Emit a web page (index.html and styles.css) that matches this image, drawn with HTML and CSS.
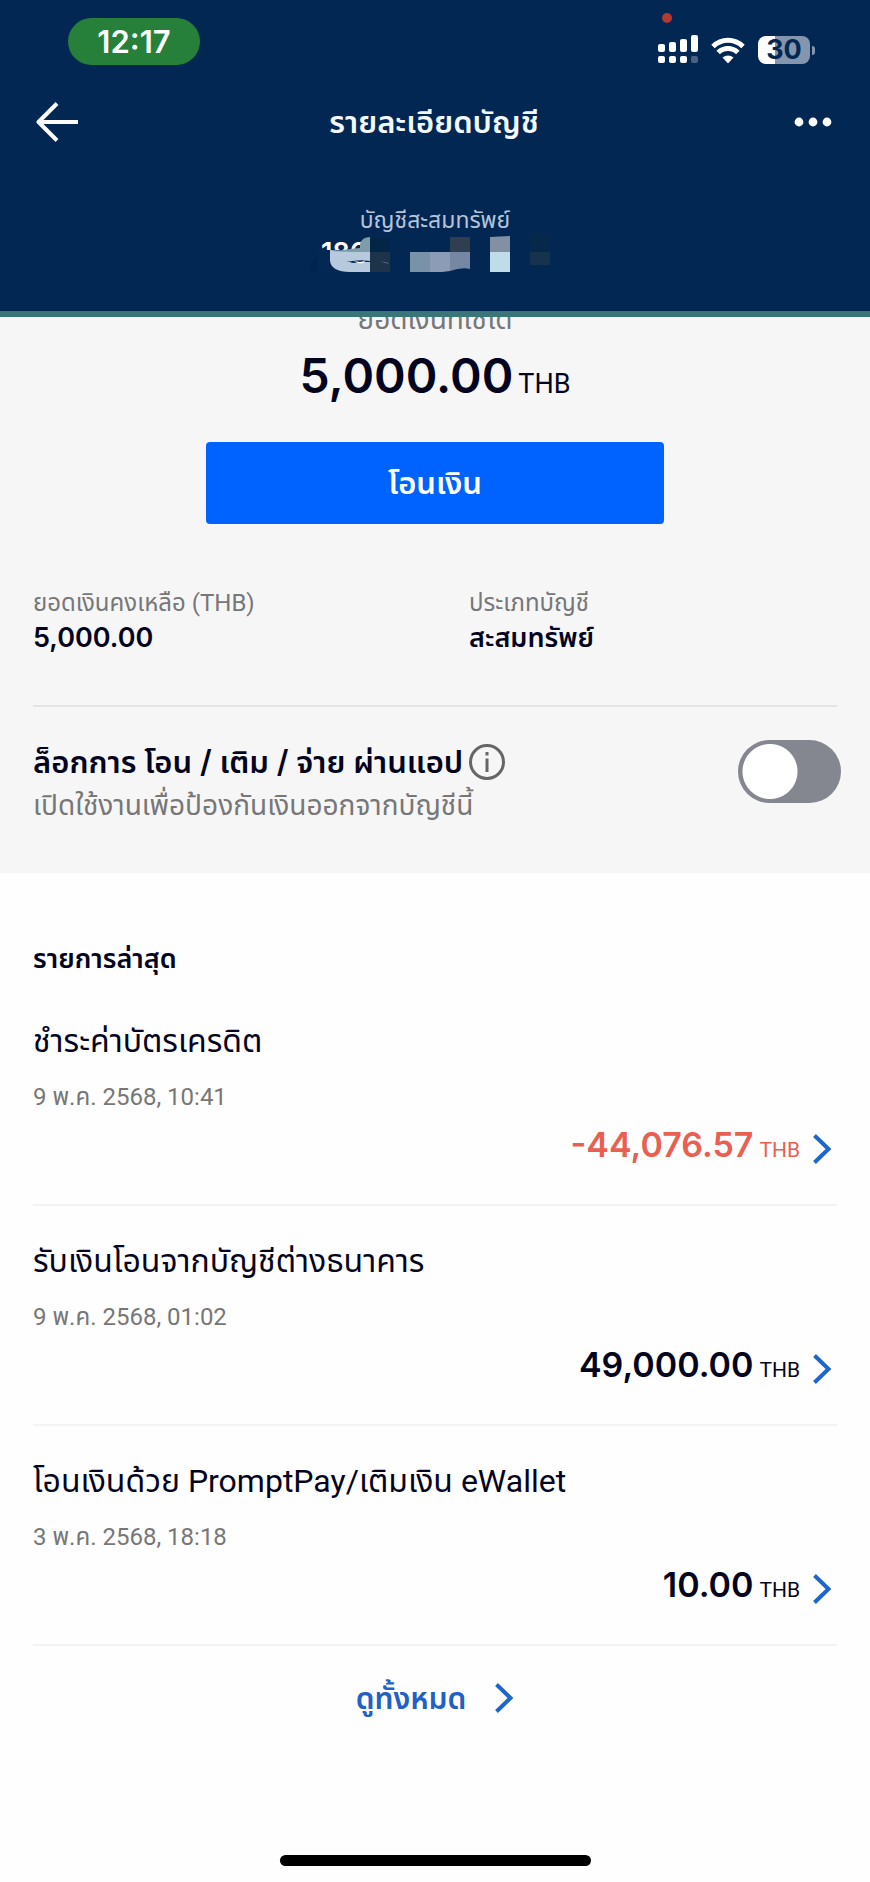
FILE: index.html
```html
<!DOCTYPE html>
<html lang="th">
<head>
<meta charset="utf-8">
<meta name="viewport" content="width=device-width, initial-scale=1">
<title>รายละเอียดบัญชี</title>
<link rel="stylesheet" href="styles.css">
</head>
<body>
<header class="header">
  <div class="status">
    <time class="clock">12:17</time>
    <div class="status-icons">
      <svg class="signal" width="40" height="52" viewBox="0 0 40 52" aria-hidden="true">
        <circle cx="9" cy="6" r="5" fill="#b33a34"/>
        <g fill="#fff">
          <rect x="0" y="32" width="7" height="8" rx="2"/><rect x="11" y="30" width="7" height="10" rx="2"/>
          <rect x="22" y="27" width="7" height="13" rx="2"/><rect x="33" y="23" width="7" height="17" rx="2"/>
          <rect x="0" y="44" width="7" height="7" rx="2"/><rect x="11" y="44" width="7" height="7" rx="2"/>
          <rect x="22" y="44" width="7" height="7" rx="2"/><rect x="33" y="44" width="7" height="7" rx="2" opacity=".28"/>
        </g>
      </svg>
      <svg width="34" height="27" viewBox="0 0 34 27" aria-hidden="true">
        <g fill="none" stroke="#fff" stroke-width="5">
          <path d="M2 9.500C10.500 1.200 23.500 1.200 32 9.500"/>
          <path d="M7.200 15.500C12.800 10.200 21.200 10.200 26.800 15.500"/>
        </g>
        <path d="M11.500 20.500C14.700 17.700 19.300 17.700 22.500 20.500L17 26.500Z" fill="#fff"/>
      </svg>
      <div class="battery"><span>30</span></div>
    </div>
  </div>
  <nav class="nav">
    <button class="icon-button" type="button" aria-label="ย้อนกลับ">
      <svg width="42" height="40" viewBox="0 0 42 40" fill="none" stroke="#fff" stroke-width="4" stroke-linejoin="round"><path d="M21 1.500 2.500 20 21 38.500M2.500 20H42"/></svg>
    </button>
    <h1 class="title">รายละเอียดบัญชี</h1>
    <button class="icon-button icon-button-end" type="button" aria-label="เพิ่มเติม">
      <svg width="38" height="10" viewBox="0 0 38 10" fill="#fff"><circle cx="5" cy="5" r="4.400"/><circle cx="19" cy="5" r="4.400"/><circle cx="33" cy="5" r="4.400"/></svg>
    </button>
  </nav>
  <p class="account-type">บัญชีสะสมทรัพย์</p>
  <svg class="account-number" width="250" height="42" viewBox="310 233 250 42" role="img" aria-label="เลขที่บัญชีถูกปิดบัง">
    <path d="M310 272l4-14 16-16v30z" fill="#01234f"/>
    <text x="321" y="262" class="masked">186</text>
    <path d="M318 250h52v22h-52z" fill="#042753"/>
    <path d="M330 250c16 2 32 0 40 2v20h-20c-12 0-20-4-20-12z" fill="#b7cadd"/>
    <path d="M360 248v-4q2-7 10-7v15c-14 0-26 0-40-1 14 0 22-3 30-3z" fill="#7f9caa"/>
    <path d="M346 262q14-3 24-1v1q-8 0-12 0-5 2-8 0z" fill="#0a2c55"/>
    <path d="M353 260q7 4 13 0l-3 3q-4 1-7-1z" fill="#fff"/>
    <path d="M370 237h20v15h-20z" fill="#032546"/>
    <path d="M370 252h20v20h-20z" fill="#1d3349"/>
    <path d="M378 257q3 6 11 6-7 1-11-6z" fill="#fff"/>
    <path d="M410 252h20v20h-20z" fill="#7892a8"/>
    <path d="M430 252h20v19l-8 1h-12z" fill="#8c9cb7"/>
    <path d="M450 237h20v15h-20z" fill="#303e50"/>
    <path d="M450 252h20v17q-8-2-20 2z" fill="#7687a4"/>
    <path d="M490 237l20-1v16h-20z" fill="#8290a3"/>
    <path d="M490 252h20v20h-20z" fill="#c1dce9"/>
    <path d="M530 233h20v19h-20z" fill="#06294b"/>
    <path d="M530 252h20v13h-20z" fill="#15334c"/>
  </svg>
</header>

<main>
  <section class="summary">
    <p class="available-label">ยอดเงินที่ใช้ได้</p>
    <p class="available"><strong>5,000.00</strong><span>THB</span></p>
    <button class="transfer" type="button">โอนเงิน</button>
    <dl class="facts">
      <div><dt>ยอดเงินคงเหลือ (THB)</dt><dd>5,000.00</dd></div>
      <div><dt>ประเภทบัญชี</dt><dd>สะสมทรัพย์</dd></div>
    </dl>
    <div class="lock">
      <div>
        <div class="lock-heading">
          <label for="lock-toggle">ล็อกการ โอน / เติม / จ่าย ผ่านแอป</label>
          <svg width="36" height="36" viewBox="0 0 36 36" fill="none" stroke="#666" aria-hidden="true"><circle cx="18" cy="18" r="16.500" stroke-width="3"/><path d="M18 14.500V28M18 8v3.500" stroke-width="3"/></svg>
        </div>
        <p class="lock-note">เปิดใช้งานเพื่อป้องกันเงินออกจากบัญชีนี้</p>
      </div>
      <input class="toggle" id="lock-toggle" type="checkbox" role="switch">
    </div>
  </section>

  <section class="recent">
    <h2>รายการล่าสุด</h2>
    <ul class="transactions">
      <li>
        <h3>ชำระค่าบัตรเครดิต</h3>
        <time>9 พ.ค. 2568, 10:41</time>
        <p class="amount amount-out"><strong>-44,076.57</strong><span>THB</span><svg class="chevron" width="20" height="32" viewBox="0 0 20 32"><path d="M2.500 2.500 16.500 16 2.500 29.500"/></svg></p>
      </li>
      <li>
        <h3>รับเงินโอนจากบัญชีต่างธนาคาร</h3>
        <time>9 พ.ค. 2568, 01:02</time>
        <p class="amount"><strong>49,000.00</strong><span>THB</span><svg class="chevron" width="20" height="32" viewBox="0 0 20 32"><path d="M2.500 2.500 16.500 16 2.500 29.500"/></svg></p>
      </li>
      <li>
        <h3>โอนเงินด้วย PromptPay/เติมเงิน eWallet</h3>
        <time>3 พ.ค. 2568, 18:18</time>
        <p class="amount"><strong>10.00</strong><span>THB</span><svg class="chevron" width="20" height="32" viewBox="0 0 20 32"><path d="M2.500 2.500 16.500 16 2.500 29.500"/></svg></p>
      </li>
    </ul>
    <a class="see-all" href="#all">ดูทั้งหมด<svg class="chevron" width="20" height="32" viewBox="0 0 20 32"><path d="M2.500 2.500 16.500 16 2.500 29.500"/></svg></a>
  </section>
</main>
<div class="home-indicator"></div>
</body>
</html>
```
FILE: styles.css
```css
* { box-sizing: border-box; }
body, h1, h2, h3, p, dl, dd, ul { margin: 0; padding: 0; }
body {
  min-height: 100vh;
  display: flex;
  flex-direction: column;
  background: #fefefe;
  color: #04041f;
  font-family: Inter, "Noto Sans Thai", "Noto Sans", sans-serif;
  font-size: 24px;
  line-height: 32px;
}
button { border: 0; padding: 0; background: none; color: inherit; font: inherit; cursor: pointer; }
svg { display: block; flex: none; }
strong { font-weight: 600; }

.header {
  position: relative;
  z-index: 1;
  height: 317px;
  border-bottom: 6px solid #3a7678;
  background: #022753;
  color: #f2f8ff;
}
.status {
  display: flex;
  justify-content: space-between;
  height: 84px;
  padding: 12px 60px 0 68px;
}
.clock {
  width: 132px;
  height: 47px;
  margin-top: 6px;
  border-radius: 24px;
  background: #26803a;
  color: #fff;
  font-size: 31px;
  font-weight: 600;
  line-height: 47px;
  text-align: center;
}
.status-icons { display: flex; align-items: flex-end; gap: 13px; height: 52px; }
.battery {
  position: relative;
  width: 52px;
  height: 28px;
  border-radius: 8px;
  background: linear-gradient(90deg, #fff 32%, #8396ae 32%);
  color: #022753;
  font-size: 27px;
  font-weight: 700;
  line-height: 28px;
  text-align: center;
}
.battery::after {
  content: "";
  position: absolute;
  top: 10px;
  right: -5px;
  width: 3px;
  height: 9px;
  border-radius: 0 4px 4px 0;
  background: #8396ae;
}
.nav {
  display: grid;
  grid-template-columns: 1fr auto 1fr;
  align-items: center;
  height: 76px;
  padding: 0 38px 0 36px;
}
.icon-button { justify-self: start; }
.icon-button-end { justify-self: end; }
.title { font-size: 31px; font-weight: 600; line-height: 40px; }
.account-type { margin-top: 44px; color: #b4c4db; font-size: 23px; line-height: 32px; text-align: center; }
.account-number { margin: -3px auto 0; }
.masked { fill: #fff; font-size: 27px; font-weight: 600; }

.summary { padding: 0 33px 47px; background: #f6f6f7; }
.available-label { margin-top: -14px; color: #777; font-size: 28px; line-height: 32px; text-align: center; }
.available {
  display: flex;
  justify-content: center;
  align-items: baseline;
  gap: 5px;
  margin-top: 9px;
  line-height: 64px;
}
.available strong { font-size: 48px; }
.available span { font-size: 27px; }
.available span, .amount span { font-family: Roboto, sans-serif; }
.transfer {
  display: block;
  width: 57%;
  height: 82px;
  margin: 26px auto 0;
  border-radius: 4px;
  background: #0062ff;
  color: #fff;
  font-size: 31px;
  font-weight: 600;
}
.facts {
  display: grid;
  grid-template-columns: 436px 1fr;
  margin-top: 62px;
  padding-bottom: 49px;
  border-bottom: 2px solid #e4e4e6;
}
.facts dt { color: #777; font-family: Roboto, "Noto Sans Thai", sans-serif; line-height: 34px; }
.facts dd { font-size: 27px; font-weight: 600; line-height: 36px; }
.lock { display: flex; justify-content: space-between; align-items: flex-start; padding-top: 33px; }
.lock-heading { display: flex; align-items: center; gap: 6px; }
.lock-heading label { font-size: 31px; font-weight: 600; line-height: 44px; }
.lock-note { color: #777; font-size: 28px; line-height: 42px; }
.toggle {
  flex: none;
  width: 103px;
  height: 63px;
  margin: 0 -4px 0 0;
  appearance: none;
  border-radius: 32px;
  background: radial-gradient(circle at 32px 50%, #fff 27px, transparent 28px), #858790;
}
.toggle:checked { background: radial-gradient(circle at 71px 50%, #fff 27px, transparent 28px), #0062ff; }

.recent { padding: 68px 33px 0; }
.recent h2 { font-size: 27px; font-weight: 600; line-height: 36px; }
.transactions { list-style: none; }
.transactions li { padding: 33px 0 39px; border-bottom: 2px solid #f3f3f4; }
.transactions li:first-child { padding-top: 42px; }
.transactions h3, .transactions time { font-family: Roboto, "Noto Sans Thai", sans-serif; }
.transactions h3 { font-size: 32px; font-weight: 400; line-height: 44px; }
.transactions time { display: block; margin-top: 18px; color: #777; line-height: 32px; }
.amount { display: flex; justify-content: flex-end; align-items: baseline; gap: 6px; height: 40px; margin-top: 12px; padding-right: 5px; line-height: 40px; }
.amount strong { font-size: 34px; }
.amount span { font-size: 21px; }
.amount-out { color: #e95f52; }
.chevron { fill: none; stroke: #1d66cc; stroke-width: 4; }
.amount .chevron { align-self: flex-end; margin-left: 6px; }
.see-all {
  display: flex;
  justify-content: center;
  align-items: center;
  gap: 28px;
  margin-top: 30px;
  color: #2260c4;
  font-size: 30px;
  font-weight: 600;
  line-height: 44px;
  text-decoration: none;
}
.home-indicator { width: 311px; height: 11px; margin: auto auto 16px; border-radius: 6px; background: #000; }
```
